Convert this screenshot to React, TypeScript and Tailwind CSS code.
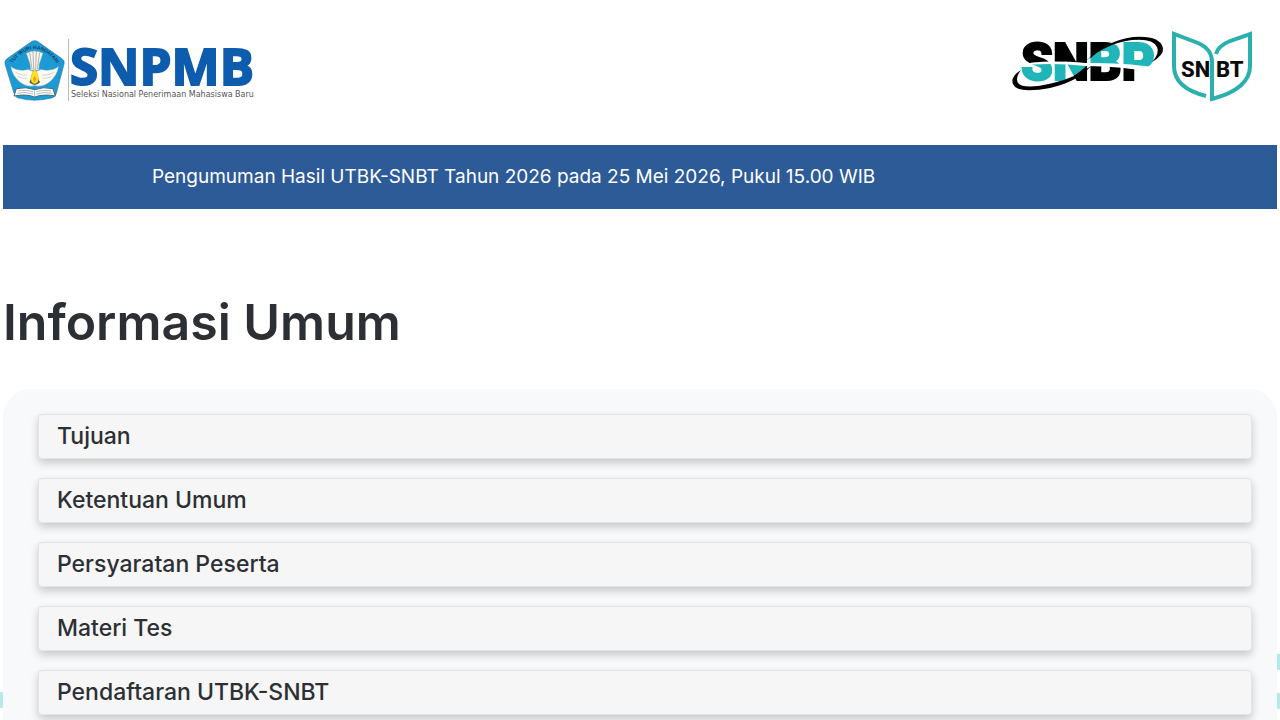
import { useState } from "react";

const sections = [
    "Tujuan",
    "Ketentuan Umum",
    "Persyaratan Peserta",
    "Materi Tes",
    "Pendaftaran UTBK-SNBT",
];

const Emblem = () => (
    <svg viewBox="0 0 183 186" className="w-[61px] h-[62px] overflow-visible" aria-hidden="true">
        <path d="M95 2 Q101 2 106 6 L177 56 Q186 62 183 72 L160 160 Q157 171 146 174 Q95 187 46 174 Q36 171 33 160 L6 72 Q4 62 12 56 L84 6 Q89 2 95 2Z" fill="#1b9ad6" stroke="#2a7aa8" strokeWidth="2" />
        <path id="motto" d="M27 72 Q95 -18 163 72" fill="none" />
        <text fontSize="15" fontWeight="700" fill="#17445f" fontFamily="'Liberation Sans', sans-serif">
            <textPath href="#motto" startOffset="50%" textAnchor="middle">TUT WURI HANDAYANI</textPath>
        </text>
        <g transform="translate(3 0)">
            <path d="M67 40 Q92 26 117 40 L106 72 L104 91 L80 91 L78 72Z" fill="#f7f6ee" stroke="#8aa2ac" strokeWidth="1.5" />
            <path d="M77 38 L84 88 M87 34 L89 88 M97 34 L95 88 M107 38 L100 88" stroke="#8c948e" strokeWidth="2" fill="none" />
            <path d="M20 79 Q42 96 73 88 L92 96 L111 88 Q142 96 164 79 Q160 107 137 126 Q116 143 92 137 Q68 143 47 126 Q24 107 20 79Z" fill="#fbfaf3" stroke="#5d98b4" strokeWidth="1.5" />
            <path d="M33 96 Q53 108 69 106 M41 109 Q56 117 69 115 M151 96 Q131 108 115 106 M143 109 Q128 117 115 115" stroke="#b9c7c8" strokeWidth="2" fill="none" />
            <path d="M92 94 L108 127 Q92 143 76 127Z" fill="#4c5b4d" />
            <path d="M92 86 Q99 99 103 110 Q106 128 92 131 Q78 128 81 110 Q85 99 92 86Z" fill="#ffe31a" stroke="#d9a928" strokeWidth="1.5" />
            <path d="M92 107 Q100 119 92 126 Q84 119 92 107Z" fill="#e79a21" />
            <path d="M37 146 Q66 139 92 149 Q118 139 147 146 L154 168 Q118 161 92 171 Q66 161 30 168Z" fill="#fff" stroke="#456c7b" strokeWidth="3" />
            <path d="M92 149 V171 M43 153 Q68 148 87 155 M39 160 Q66 154 87 162 M141 153 Q116 148 97 155 M145 160 Q118 154 97 162" stroke="#8b9da2" strokeWidth="2" fill="none" />
        </g>
    </svg>
);

const SnpmbLogo = () => (
    <svg viewBox="0 0 190 66" className="w-[190px] h-[66px] overflow-visible" role="img" aria-label="SNPMB">
        <path d="M4.5 1 V63" stroke="#b9b9bb" />
        <text x="6" y="47" fontSize="51" fontWeight="700" fill="#0e5cad" stroke="#0e5cad" strokeWidth="2" fontFamily="'Open Sans', 'Noto Sans', sans-serif">SNPMB</text>
        <text x="7" y="59" fontSize="8" fill="#555" fontFamily="'DejaVu Sans', sans-serif">Seleksi Nasional Penerimaan Mahasiswa Baru</text>
    </svg>
);

const SnbpLogo = () => (
    <svg viewBox="0 0 156 66" className="w-[156px] h-[66px] overflow-visible" role="img" aria-label="SNBP">
        <defs>
            <pattern id="snbp" patternUnits="userSpaceOnUse" width="156" height="66">
                <rect width="156" height="66" fill="#000" />
                <path d="M0 32 Q40 30 79 31 Q66 46 40 53 L0 62Z" fill="#20b5b8" />
                <path d="M77 31 Q94 8 124 4 H156 V38 Q118 30 77 31Z" fill="#20b5b8" />
                <path d="M8 33 Q28 26 77 30 Q118 29 156 36 L148 40 Q112 33 77 33 Q40 29 8 33Z" fill="#fff" />
            </pattern>
        </defs>
        <text x="12" y="47" fontSize="51" fontWeight="900" fill="url(#snbp)" stroke="url(#snbp)" strokeWidth="2" fontFamily="Roboto, sans-serif">SNBP</text>
        <path d="M77 28 Q96 8 124 4 Q151 2 154 15 Q155 22 143 29 Q151 20 148 14 Q144 5 123 7 Q98 10 77 28Z" fill="#000" />
        <path d="M12 37 Q1 44 4 51 Q8 61 41 55 Q68 49 82 33 Q66 45 44 50 Q15 57 9 50 Q6 45 12 37Z" fill="#000" />
    </svg>
);

const SnbtLogo = () => (
    <svg viewBox="0 0 84 74" className="w-[84px] h-[74px] overflow-visible" role="img" aria-label="SNBT">
        <path d="M37 67 Q5 59 5 37 V5 L29 14 Q43 20 43 33 V70 Q81 60 81 37 V5 L61 12 Q49 17 47 25" fill="none" stroke="#2bb0ae" strokeWidth="4" />
        <text x="12" y="48" fontSize="22" fontWeight="800" fill="#0b0b0b" fontFamily="Roboto, sans-serif">SN</text>
        <text x="47" y="48" fontSize="22" fontWeight="800" fill="#0b0b0b" fontFamily="Roboto, sans-serif">BT</text>
    </svg>
);

const App = () => {
    const [active, setActive] = useState("");

    return (
        <div className="relative flex flex-col min-h-screen px-[3px] bg-white text-[#2c3035] font-['Inter','Noto_Sans',sans-serif]">
            <span className="absolute left-0 top-[692px] w-[3px] h-4 bg-[#b5eae8]" />
            <span className="absolute right-0 top-[654px] w-1 h-4 bg-[#b5eae8]" />
            <span className="absolute right-0 top-[693px] w-1 h-4 bg-[#b5eae8]" />

            <header className="flex items-center justify-between h-[145px] pb-1 pr-6">
                <a href="#" className="flex items-center">
                    <Emblem />
                    <SnpmbLogo />
                </a>
                <div className="flex items-center gap-1 pb-[10px]">
                    <a href="#snbp"><SnbpLogo /></a>
                    <a href="#snbt"><SnbtLogo /></a>
                </div>
            </header>

            <div className="flex items-center h-16 px-[149px] bg-[#2d5b98] text-white">
                <p className="text-[19px] leading-7 whitespace-nowrap">Pengumuman Hasil UTBK-SNBT Tahun 2026 pada 25 Mei 2026, Pukul 15.00 WIB</p>
            </div>

            <h1 className="mt-[79px] mb-[33px] text-[50px] leading-[68px] font-semibold">Informasi Umum</h1>

            <main className="relative flex flex-col flex-1 gap-[19px] pt-[25px] pb-1 pl-[35px] pr-[25px] rounded-t-[28px] bg-[#f8f9fb]">
                {sections.map(title => (
                    <button
                        key={title}
                        type="button"
                        aria-expanded={active === title}
                        onClick={() => setActive(active === title ? "" : title)}
                        className="flex items-center w-full h-[45px] px-[18px] rounded-sm border border-[#e3e4e6] bg-[#f6f6f6] text-[23px] font-medium text-left shadow-[0_4px_8px_rgba(0,0,0,0.2)] cursor-pointer"
                    >
                        {title}
                    </button>
                ))}
            </main>
        </div>
    );
};

export default App;
